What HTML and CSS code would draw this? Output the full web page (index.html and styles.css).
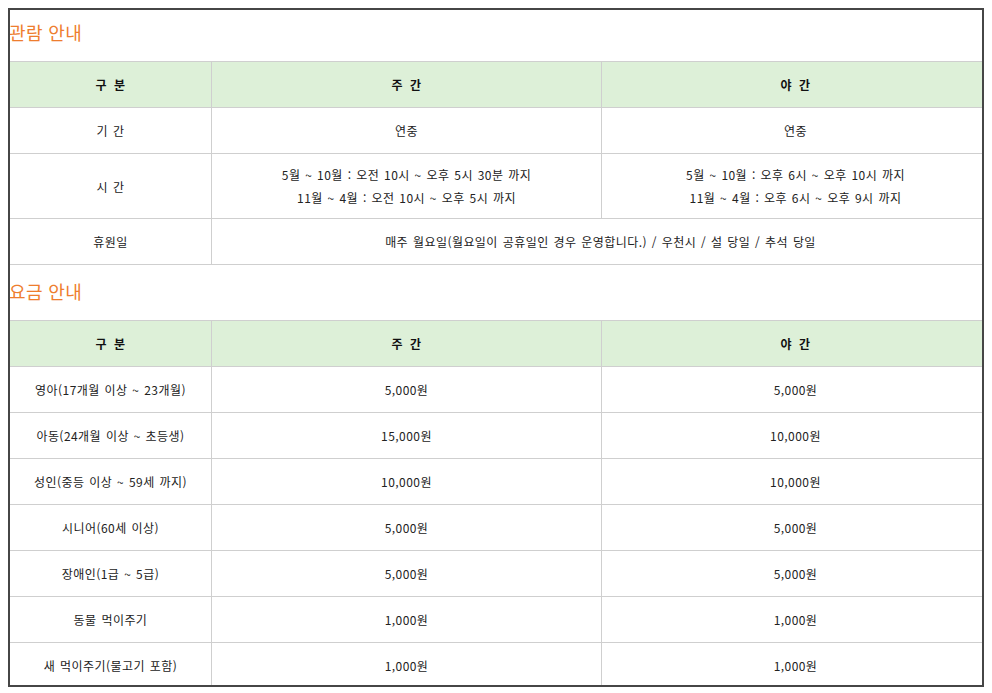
FILE: index.html
```html
<!DOCTYPE html>
<html lang="ko">
<head>
<meta charset="utf-8">
<title>관람 안내</title>
<link rel="stylesheet" href="styles.css">
</head>
<body>
<div class="frame">
  <div class="content">
    <h2 class="title">관람 안내</h2>
    <table class="info">
      <colgroup><col class="c1"><col class="c2"><col class="c3"></colgroup>
      <thead>
        <tr><th>구 분</th><th>주 간</th><th>야 간</th></tr>
      </thead>
      <tbody>
        <tr><td>기 간</td><td>연중</td><td>연중</td></tr>
        <tr class="two"><td>시 간</td><td>5월 ~ 10월 : 오전 10시 ~ 오후 5시 30분 까지<br>11월 ~ 4월 : 오전 10시 ~ 오후 5시 까지</td><td>5월 ~ 10월 : 오후 6시 ~ 오후 10시 까지<br>11월 ~ 4월 : 오후 6시 ~ 오후 9시 까지</td></tr>
        <tr><td>휴원일</td><td colspan="2">매주 월요일(월요일이 공휴일인 경우 운영합니다.) / 우천시 / 설 당일 / 추석 당일</td></tr>
      </tbody>
    </table>
    <h2 class="title title-next">요금 안내</h2>
    <table class="info">
      <colgroup><col class="c1"><col class="c2"><col class="c3"></colgroup>
      <thead>
        <tr><th>구 분</th><th>주 간</th><th>야 간</th></tr>
      </thead>
      <tbody>
        <tr><td>영아(17개월 이상 ~ 23개월)</td><td>5,000원</td><td>5,000원</td></tr>
        <tr><td>아동(24개월 이상 ~ 초등생)</td><td>15,000원</td><td>10,000원</td></tr>
        <tr><td>성인(중등 이상 ~ 59세 까지)</td><td>10,000원</td><td>10,000원</td></tr>
        <tr><td>시니어(60세 이상)</td><td>5,000원</td><td>5,000원</td></tr>
        <tr><td>장애인(1급 ~ 5급)</td><td>5,000원</td><td>5,000원</td></tr>
        <tr><td>동물 먹이주기</td><td>1,000원</td><td>1,000원</td></tr>
        <tr><td>새 먹이주기(물고기 포함)</td><td>1,000원</td><td>1,000원</td></tr>
      </tbody>
    </table>
  </div>
</div>
</body>
</html>
```

FILE: styles.css
```css
html, body {
  background: #ffffff;
}
body {
  margin: 8px;
  font-family: "Noto Sans CJK KR", "Noto Sans", sans-serif;
  font-size: 12px;
  color: #222222;
}
.frame {
  position: relative;
  width: 976px;
  height: 679px;
}
.frame::after {
  content: "";
  position: absolute;
  left: 0;
  top: 0;
  right: 0;
  bottom: 0;
  border: 2px solid #464646;
  pointer-events: none;
  z-index: 2;
}
.content {
  margin-left: 1px;
}
.title {
  margin: 0 0 17px;
  padding-top: 12px;
  font-size: 18px;
  line-height: 24px;
  font-weight: 400;
  color: #ee7d2e;
  letter-spacing: 0.4px;
}
.title-next {
  padding-top: 14px;
}
.info {
  border-collapse: collapse;
  width: 980px;
  table-layout: fixed;
}
.c1 { width: 202px; }
.c2 { width: 390px; }
.c3 { width: 388px; }
.info th, .info td {
  border: 1px solid #cfcfcf;
  text-align: center;
  vertical-align: middle;
  padding: 11px 4px 11px;
  line-height: 23px;
  font-size: 12px;
  letter-spacing: 0.45px;
  word-spacing: 1px;
}
.info th {
  background: #ddf0d8;
  font-weight: 700;
  color: #111111;
  word-spacing: 3px;
}
.info td {
  font-weight: 400;
}
.info .two td {
  padding: 9px 4px 9px;
}
```
